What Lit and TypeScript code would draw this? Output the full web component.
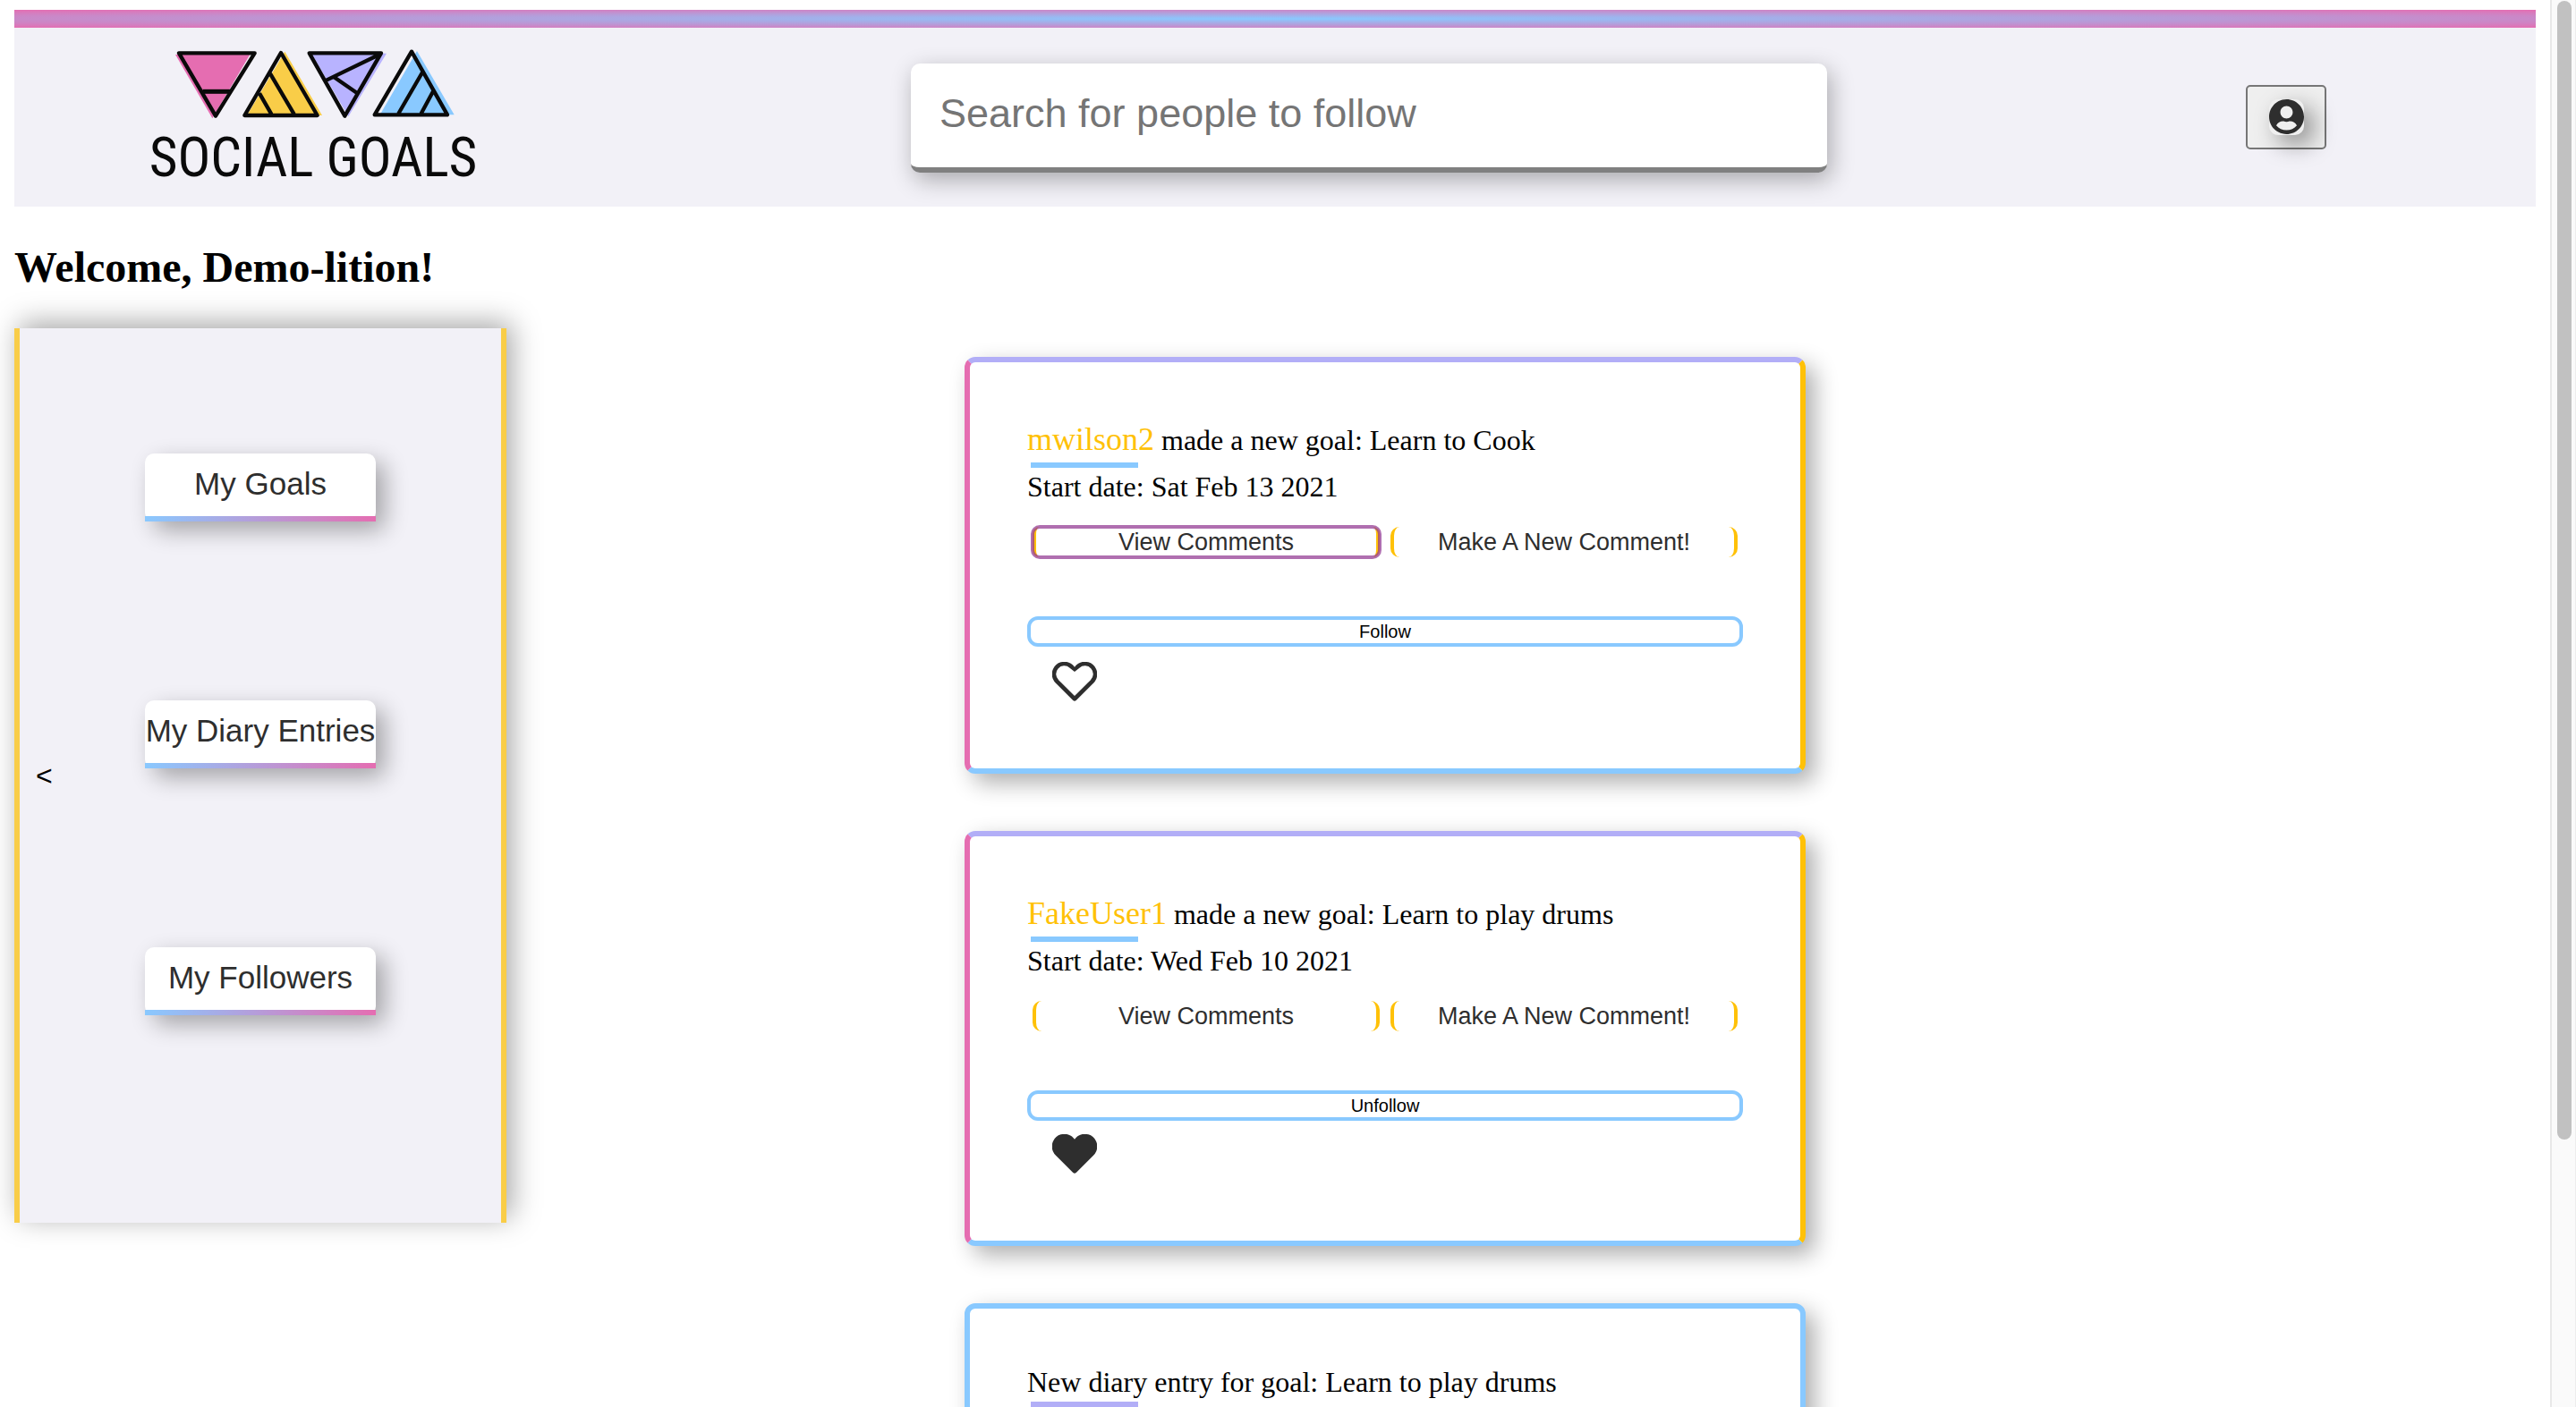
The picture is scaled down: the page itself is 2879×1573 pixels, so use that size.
import { LitElement, html, css, svg } from "lit";
import { customElement, property } from "lit/decorators.js";
import { classMap } from "lit/directives/class-map.js";

interface FeedItem {
  kind: "goal" | "diary";
  user?: string;
  text: string;
  date?: string;
  following?: boolean;
  liked?: boolean;
  focused?: boolean;
}

const FEED: FeedItem[] = [
  { kind: "goal", user: "mwilson2", text: "made a new goal: Learn to Cook", date: "Sat Feb 13 2021", focused: true },
  { kind: "goal", user: "FakeUser1", text: "made a new goal: Learn to play drums", date: "Wed Feb 10 2021", following: true, liked: true },
  { kind: "diary", text: "New diary entry for goal: Learn to play drums" },
];

const LINKS = ["My Goals", "My Diary Entries", "My Followers"];

const HEART_OUTER =
  "M4 23.7A13.9 13.9 0 1 1 25 5.7A13.9 13.9 0 1 1 46 23.7L27 42.7Q25 44.7 23 42.7Z";
const HEART_INNER =
  "M25 11L19.6 6.7A9.2 9.2 0 0 0 7.3 20.4L25 38.1L42.7 20.4A9.2 9.2 0 0 0 30.4 6.7Z";

@customElement("goal-logo")
class GoalLogo extends LitElement {
  static styles = css`
    :host { display: block; flex: none; }
    .logo { display: block; }
    .word { font-family: "Roboto Condensed", "Liberation Sans Narrow", "Open Sans Condensed", "Liberation Sans", sans-serif; font-size: 184px; }
  `;
  render() {
    return html`
      <svg class="logo" width="400" height="180" viewBox="0 0 1200 540" role="img" aria-label="Social Goals">
        <path d="M138 60H388L262 274Z" fill="#e56db1" />
        <path d="M505 50L630 264H378Z" fill="#f9cd48" />
        <path d="M594 56H846L718 268Z" fill="#b8b3ff" />
        <path d="M948 48L1073 262H824Z" fill="#89c9ff" />
        <g fill="none" stroke="#0a0a0a" stroke-width="13" stroke-linejoin="round">
          <path d="M150 55H404L273 266Z" />
          <path d="M230 184H322" stroke-width="15" />
          <path d="M492 54L614 264H370ZM456 124L536 260M420 190L460 260" />
          <path d="M587 55H828L706 266ZM828 57L640 148M668 134L746 188" />
          <path d="M930 50L1050 262H806ZM966 120L886 258M1002 184L962 258" />
        </g>
        <text class="word" x="600" y="469" text-anchor="middle" fill="#0a0a0a">SOCIAL GOALS</text>
      </svg>
    `;
  }
}

@customElement("feed-card")
class FeedCard extends LitElement {
  @property({ attribute: false }) item!: FeedItem;

  static styles = css`
    :host { display: block; }
    .card {
      box-sizing: border-box;
      padding: 64px;
      border: 6px solid;
      border-color: #b2aef7 #ffc107 #89c9ff #e56db1;
      border-radius: 12px;
      background: #fff;
      box-shadow: 10px 10px 26px rgba(0, 0, 0, 0.32);
      font-family: "Liberation Serif", serif;
      font-size: 32px;
      color: #000;
    }
    .diary { border-color: #89c9ff; }
    .title { margin: 0; line-height: 46px; }
    .diary .title { line-height: 36px; padding-bottom: 2px; }
    .user { color: #ffc107; font-size: 36px; line-height: 1; text-decoration: none; }
    .rule { width: 120px; height: 6px; margin: 2px 4px; background: #89c9ff; }
    .diary .rule { background: #b2aef7; }
    .date { margin: 0; line-height: 38px; }
    .actions { display: grid; grid-template-columns: 1fr 1fr; gap: 12px; margin: 26px 6px 66px; }
    button { padding: 0; margin: 0; background: none; font-family: "Liberation Sans", sans-serif; cursor: pointer; }
    .comment {
      height: 34px;
      border: 0 solid #ffc107;
      border-width: 0 4px;
      border-radius: 10px;
      color: #2e2e2e;
      font-size: 27px;
      line-height: 34px;
    }
    .focused { outline: 4px solid rgba(145, 56, 145, 0.72); outline-offset: -2px; border-radius: 8px; }
    .follow {
      display: block;
      width: 100%;
      height: 34px;
      border: 4px solid #89c9ff;
      border-radius: 12px;
      color: #000;
      font-size: 20px;
      line-height: 26px;
    }
    .like { display: block; border: 0; padding: 17px 28px 11px; }
    .liked { padding-top: 15px; }
    .like svg { display: block; }
  `;

  render() {
    const it = this.item;
    if (it.kind === "diary") {
      return html`<article class="card diary">
        <p class="title">${it.text}</p>
        <div class="rule"></div>
      </article>`;
    }
    return html`
      <article class="card">
        <p class="title"><a class="user" href="#">${it.user}</a> ${it.text}</p>
        <div class="rule"></div>
        <p class="date">Start date: ${it.date}</p>
        <div class="actions">
          <button class=${classMap({ comment: true, focused: !!it.focused })}>View Comments</button>
          <button class="comment">Make A New Comment!</button>
        </div>
        <button class="follow">${it.following ? "Unfollow" : "Follow"}</button>
        <button class=${classMap({ like: true, liked: !!it.liked })} aria-label="Like" aria-pressed=${it.liked ? "true" : "false"}>
          <svg width="50" height="44" viewBox="0 0 50 44" fill="#2e2e2e" fill-rule="evenodd">
            ${svg`<path d=${it.liked ? HEART_OUTER : HEART_OUTER + HEART_INNER} />`}
          </svg>
        </button>
      </article>
    `;
  }
}

@customElement("app-root")
class AppRoot extends LitElement {
  static styles = css`
    :host {
      display: flex;
      height: 100vh;
      overflow: hidden;
      background: #fff;
      font-family: "Liberation Serif", serif;
      color: #000;
    }
    .page { flex: 1; min-width: 0; padding: 11px 16px 0; overflow: hidden; }
    .stripe { height: 20px; background: radial-gradient(#89c9ff, #e56db1); }
    .header {
      display: flex;
      justify-content: space-around;
      align-items: center;
      height: 200px;
      background: #f2f1f7;
    }
    .brand { display: flex; justify-content: flex-end; width: 300px; }
    .search {
      box-sizing: border-box;
      width: 1024px;
      height: 122px;
      margin: 2px 0 0;
      padding: 0 32px 4px;
      border: 0;
      border-bottom: 6px solid #808080;
      border-radius: 10px;
      background: #fff;
      box-shadow: 4px 8px 26px rgba(0, 0, 0, 0.3);
      font-family: "Liberation Sans", sans-serif;
      font-size: 45px;
      outline: none;
    }
    .search::placeholder { color: #757575; opacity: 1; }
    .account {
      display: flex;
      align-items: center;
      justify-content: center;
      box-sizing: border-box;
      width: 90px;
      height: 72px;
      padding: 0;
      border: 2px solid #767676;
      border-radius: 5px;
      background: #efefef;
    }
    .avatar {
      display: block;
      height: 40px;
      border-radius: 10px;
      box-shadow: 10px 10px 26px rgba(0, 0, 0, 0.4);
    }
    .avatar svg { display: block; }
    .welcome { margin: 40px 0; font-size: 48px; line-height: 56px; font-weight: 700; }
    .columns { display: grid; grid-template-columns: 550px minmax(0, 1fr) 304px; align-items: start; }
    .panel {
      display: grid;
      grid-template-columns: 1fr 258px 1fr;
      align-items: center;
      border: 0 solid #f9cd48;
      border-width: 0 6px;
      background: #f2f1f7;
      box-shadow: 6px -6px 30px rgba(0, 0, 0, 0.35);
    }
    .collapse {
      justify-self: start;
      padding: 0 18px;
      border: 0;
      background: none;
      font-family: "Liberation Sans", sans-serif;
      font-size: 32px;
      line-height: 36px;
      color: #000;
    }
    .links { display: grid; gap: 200px; padding: 140px 0 232px; }
    .link {
      height: 76px;
      padding: 0 0 2px;
      border: 0 solid;
      border-bottom-width: 6px;
      border-image: linear-gradient(to right, #89c9ff, #e56db1) 1;
      border-radius: 10px;
      background: #fff;
      box-shadow: 10px 10px 26px rgba(0, 0, 0, 0.32);
      font-family: "Liberation Sans", sans-serif;
      font-size: 35px;
      color: #2e2e2e;
      white-space: nowrap;
    }
    .feed { display: flex; flex-direction: column; gap: 64px; width: 940px; justify-self: center; padding-top: 32px; }
    .scrollbar {
      flex: none;
      box-sizing: border-box;
      width: 29px;
      padding: 1px 4px 0 6px;
      border-left: 2px solid #e8e8e8;
      border-right: 1px solid #ededed;
      background: #fafafa;
    }
    .thumb { height: 81%; border-radius: 8px; background: #c1c1c1; }
  `;

  render() {
    return html`
      <div class="page">
        <div class="stripe"></div>
        <header class="header">
          <div class="brand"><goal-logo></goal-logo></div>
          <input class="search" type="text" aria-label="Search for people to follow" placeholder="Search for people to follow" />
          <button class="account" aria-label="Account">
            <span class="avatar">
              <svg width="39" height="39" viewBox="0 8 496 496" fill="#2e2e2e">
                <path d="M248 8C111 8 0 119 0 256s111 248 248 248 248-111 248-248S385 8 248 8zm0 96c48.6 0 88 39.4 88 88s-39.4 88-88 88-88-39.4-88-88 39.4-88 88-88zm0 344c-58.7 0-111.3-26.6-146.5-68.2 18.8-35.4 55.6-59.8 98.5-59.8 2.4 0 4.8.4 7.1 1.1 13 4.2 26.6 6.9 40.9 6.9 14.3 0 28-2.7 40.9-6.9 2.3-.7 4.7-1.1 7.1-1.1 42.9 0 79.7 24.4 98.5 59.8C359.3 421.4 306.7 448 248 448z" />
              </svg>
            </span>
          </button>
        </header>
        <h2 class="welcome">Welcome, Demo-lition!</h2>
        <div class="columns">
          <aside class="panel">
            <button class="collapse" aria-label="Collapse menu">&lt;</button>
            <nav class="links">${LINKS.map((l) => html`<button class="link">${l}</button>`)}</nav>
          </aside>
          <main class="feed">${FEED.map((item) => html`<feed-card .item=${item}></feed-card>`)}</main>
        </div>
      </div>
      <div class="scrollbar"><div class="thumb"></div></div>
    `;
  }
}
